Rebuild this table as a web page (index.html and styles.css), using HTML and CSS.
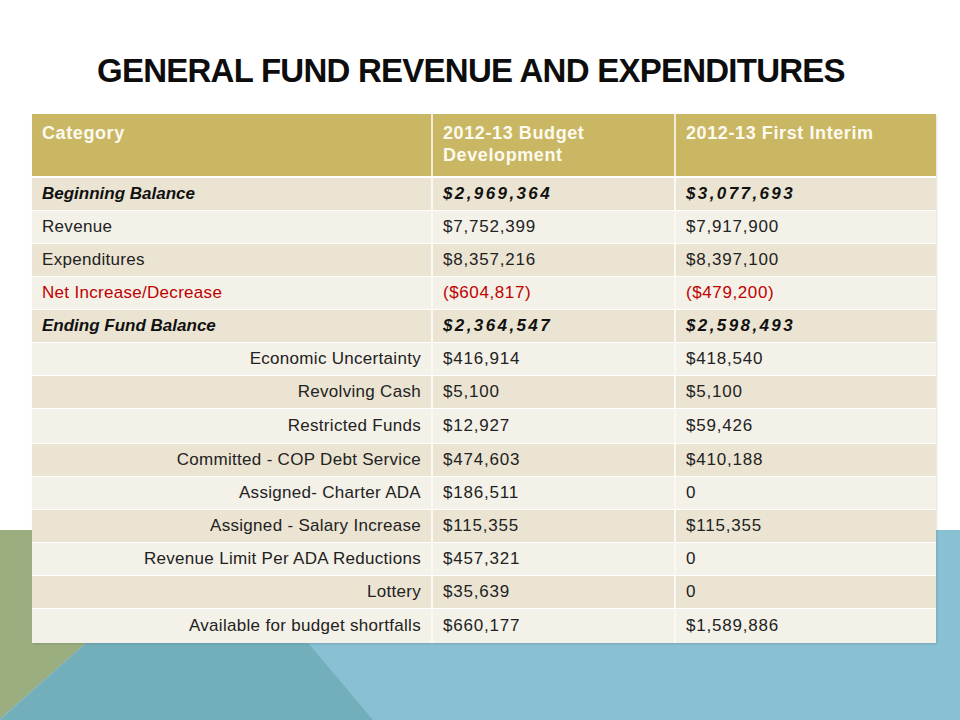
FILE: index.html
```html
<!DOCTYPE html>
<html lang="en">
<head>
<meta charset="utf-8">
<title>General Fund Revenue and Expenditures</title>
<link rel="stylesheet" href="styles.css">
</head>
<body>
<svg class="backdrop" width="960" height="720" viewBox="0 0 960 720" aria-hidden="true">
  <rect x="0" y="530" width="960" height="190" fill="#89c0d4"/>
  <polygon points="213,530 0,720 373,720" fill="#72afbb"/>
  <polygon points="0,530 213,530 0,719" fill="#9bae80"/>
</svg>
<main class="slide">
  <h1 class="title">GENERAL FUND REVENUE AND EXPENDITURES</h1>
  <table class="fund">
    <colgroup>
      <col class="c1"><col class="c2"><col class="c3">
    </colgroup>
    <thead>
      <tr>
        <th>Category</th>
        <th>2012-13 Budget<br>Development</th>
        <th>2012-13 First Interim</th>
      </tr>
    </thead>
    <tbody>
      <tr class="dark em"><td>Beginning Balance</td><td>$2,969,364</td><td>$3,077,693</td></tr>
      <tr class="light"><td>Revenue</td><td>$7,752,399</td><td>$7,917,900</td></tr>
      <tr class="dark"><td>Expenditures</td><td>$8,357,216</td><td>$8,397,100</td></tr>
      <tr class="light neg"><td>Net Increase/Decrease</td><td>($604,817)</td><td>($479,200)</td></tr>
      <tr class="dark em"><td>Ending Fund Balance</td><td>$2,364,547</td><td>$2,598,493</td></tr>
      <tr class="light sub"><td>Economic Uncertainty</td><td>$416,914</td><td>$418,540</td></tr>
      <tr class="dark sub"><td>Revolving Cash</td><td>$5,100</td><td>$5,100</td></tr>
      <tr class="light sub tall"><td>Restricted Funds</td><td>$12,927</td><td>$59,426</td></tr>
      <tr class="dark sub"><td>Committed - COP Debt Service</td><td>$474,603</td><td>$410,188</td></tr>
      <tr class="light sub"><td>Assigned- Charter ADA</td><td>$186,511</td><td>0</td></tr>
      <tr class="dark sub"><td>Assigned - Salary Increase</td><td>$115,355</td><td>$115,355</td></tr>
      <tr class="light sub"><td>Revenue Limit Per ADA Reductions</td><td>$457,321</td><td>0</td></tr>
      <tr class="dark sub"><td>Lottery</td><td>$35,639</td><td>0</td></tr>
      <tr class="light sub tall"><td>Available for budget shortfalls</td><td>$660,177</td><td>$1,589,886</td></tr>
    </tbody>
  </table>
</main>
</body>
</html>
```
FILE: styles.css
```css
html, body {
  margin: 0;
  padding: 0;
  background: #ffffff;
}

body {
  width: 960px;
  height: 720px;
  overflow: hidden;
  position: relative;
  font-family: "Liberation Sans", Arial, sans-serif;
}

.backdrop {
  position: absolute;
  left: 0;
  top: 0;
  z-index: 0;
}

.slide {
  position: relative;
  z-index: 1;
  padding: 53px 0 0 32px;
}

.title {
  margin: 0 0 25px 65px;
  font-size: 33px;
  line-height: 36px;
  font-weight: 700;
  color: #0d0d0d;
  letter-spacing: -0.75px;
  white-space: nowrap;
}

.fund {
  width: 904px;
  border-collapse: collapse;
  table-layout: fixed;
  box-shadow: 1px 1px 2px rgba(0, 0, 0, 0.12);
}

.c1 { width: 400px; }
.c2 { width: 243px; }
.c3 { width: 261px; }

.fund th {
  background: #c9b764;
  color: #fdfaf0;
  font-size: 18px;
  font-weight: 700;
  letter-spacing: 0.6px;
  line-height: 22px;
  text-align: left;
  vertical-align: top;
  height: 48px;
  padding: 8px 10px 6px 10px;
  border-left: 2px solid #f2ecd8;
  border-bottom: 2px solid #ffffff;
}

.fund th:first-child,
.fund td:first-child {
  border-left: none;
}

.fund td {
  height: 32px;
  padding: 0 10px;
  font-size: 17px;
  letter-spacing: 0.3px;
  color: #222222;
  vertical-align: middle;
  border-top: 1px solid #ffffff;
  border-left: 2px solid #fbf9f3;
  white-space: nowrap;
}

.fund td + td {
  letter-spacing: 0.8px;
}

.fund tr.tall td {
  height: 34px;
}

.dark td { background: #ebe4d2; }
.light td { background: #f4f1e8; }

.em td {
  font-style: italic;
  font-weight: 700;
  color: #111111;
  letter-spacing: 0;
}

.em td + td {
  letter-spacing: 2.4px;
}

.neg td {
  color: #c00000;
}

.neg td + td {
  letter-spacing: 0.6px;
}

.sub td:first-child {
  text-align: right;
}
```
